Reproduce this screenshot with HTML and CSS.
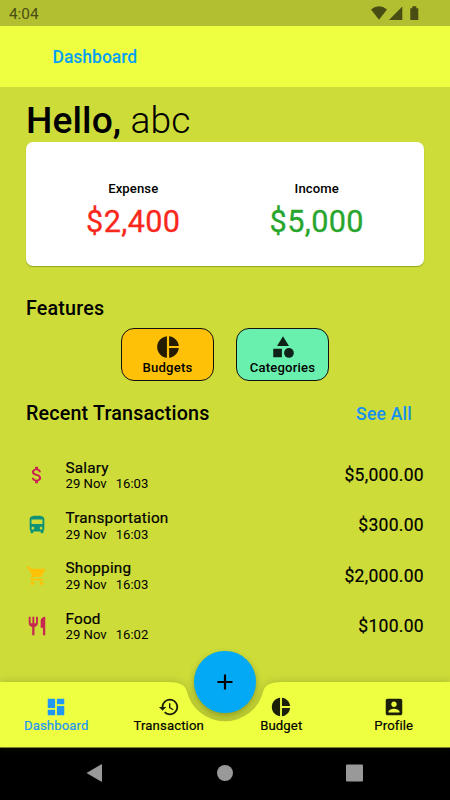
FILE: index.html
```html
<!DOCTYPE html>
<html lang="en">
<head>
<meta charset="utf-8">
<title>Dashboard</title>
<link rel="stylesheet" href="styles.css">
</head>
<body>
<svg class="sprite" width="0" height="0">
  <symbol id="pie" viewBox="0 0 24 24"><path d="M11 2v20c-5.070-.5-9-4.790-9-10s3.930-9.500 9-10zm2.030 0v8.990H22c-.47-4.740-4.240-8.520-8.970-8.990zm0 11.010V22c4.740-.47 8.500-4.250 8.970-8.990h-8.970z"/></symbol>
</svg>
<div class="screen">
  <div class="status">
    <span class="clock">4:04</span>
    <svg class="status-icons" width="50" height="16" viewBox="0 0 50 16"><path d="M0 3.600Q8-3.200 16 3.600L8 13.700zM18 14L31.300.6V14zM39.300 2.300h2V.3h4v2h2V14h-8z"/></svg>
  </div>
  <header class="appbar">Dashboard</header>
  <main class="content">
    <h1 class="hello"><b>Hello,</b> <span>abc</span></h1>
    <section class="card">
      <div class="total"><span class="label">Expense</span><span class="sum expense">$2,400</span></div>
      <div class="total"><span class="label">Income</span><span class="sum income">$5,000</span></div>
    </section>
    <h2 class="features-title">Features</h2>
    <div class="features">
      <div class="feature budgets"><svg><use href="#pie"/></svg><span>Budgets</span></div>
      <div class="feature categories"><svg viewBox="0 0 24 24"><path d="M12 2l-5.500 9h11zM3 13.500h8v8H3z"/><circle cx="17.500" cy="17.500" r="4.500"/></svg><span>Categories</span></div>
    </div>
    <div class="recent"><h2>Recent Transactions</h2><a class="see-all">See All</a></div>
    <ul class="list">
      <li>
        <svg class="pink" viewBox="0 0 24 24"><path d="M11.800 10.900c-2.270-.59-3-1.200-3-2.150 0-1.090 1.010-1.850 2.700-1.850 1.780 0 2.440.85 2.500 2.100h2.210c-.07-1.720-1.120-3.300-3.210-3.810V3h-3v2.160c-1.940.42-3.500 1.680-3.500 3.610 0 2.310 1.910 3.460 4.700 4.130 2.500.6 3 1.480 3 2.410 0 .69-.49 1.790-2.700 1.790-2.060 0-2.870-.92-2.980-2.100h-2.200c.12 2.190 1.760 3.420 3.680 3.830V21h3v-2.150c1.950-.37 3.500-1.500 3.500-3.550 0-2.840-2.430-3.810-4.700-4.400z"/></svg>
        <div class="info"><span class="name">Salary</span><span class="date"><span>29 Nov</span><span>16:03</span></span></div><span class="amount">$5,000.00</span>
      </li>
      <li>
        <svg class="teal" viewBox="0 0 24 24"><path d="M4 16c0 .88.39 1.670 1 2.220V20c0 .55.45 1 1 1h1c.55 0 1-.45 1-1v-1h8v1c0 .55.45 1 1 1h1c.55 0 1-.45 1-1v-1.780c.61-.55 1-1.340 1-2.220V6c0-3.500-3.580-4-8-4s-8 .5-8 4v10zm3.500 1c-.83 0-1.500-.67-1.500-1.500S6.670 14 7.500 14s1.500.67 1.500 1.500S8.330 17 7.500 17zm9 0c-.83 0-1.500-.67-1.500-1.500s.67-1.500 1.500-1.500 1.500.67 1.500 1.500-.67 1.500-1.500 1.500zm1.500-6H6V6h12v5z"/></svg>
        <div class="info"><span class="name">Transportation</span><span class="date"><span>29 Nov</span><span>16:03</span></span></div><span class="amount">$300.00</span>
      </li>
      <li>
        <svg class="amber" viewBox="0 0 24 24"><path d="M7 18c-1.100 0-1.990.9-1.990 2S5.900 22 7 22s2-.9 2-2-.9-2-2-2zM1 2v2h2l3.600 7.590-1.350 2.450c-.16.28-.25.61-.25.96 0 1.100.9 2 2 2h12v-2H7.420c-.14 0-.25-.11-.25-.25l.03-.12.9-1.630h7.450c.75 0 1.410-.41 1.750-1.030l3.580-6.490c.08-.14.12-.31.12-.48 0-.55-.45-1-1-1H5.210l-.94-2H1zm16 16c-1.100 0-1.990.9-1.990 2s.89 2 1.990 2 2-.9 2-2-.9-2-2-2z"/></svg>
        <div class="info"><span class="name">Shopping</span><span class="date"><span>29 Nov</span><span>16:03</span></span></div><span class="amount">$2,000.00</span>
      </li>
      <li>
        <svg class="red" viewBox="0 0 24 24"><path d="M11 9H9V2H7v7H5V2H3v7c0 2.120 1.660 3.840 3.750 3.970V22h2.500v-9.030C11.340 12.840 13 11.120 13 9V2h-2v7zm5-3v8h2.500v8H21V2c-2.760 0-5 2.240-5 4z"/></svg>
        <div class="info"><span class="name">Food</span><span class="date"><span>29 Nov</span><span>16:02</span></span></div><span class="amount">$100.00</span>
      </li>
    </ul>
  </main>
  <nav class="tabs">
    <svg class="tabs-shape" width="450" height="66" viewBox="0 0 450 66"><path d="M0 0H168.100Q184.500 0 186.700 9.100A39.400 39.400 0 0 0 263.300 9.100Q265.500 0 281.900 0H450V65.500H0z"/></svg>
    <div class="tab active"><svg viewBox="0 0 24 24"><path d="M3 13h8V3H3v10zm0 8h8v-6H3v6zm10 0h8V11h-8v10zm0-18v6h8V3h-8z"/></svg><span>Dashboard</span></div>
    <div class="tab"><svg viewBox="0 0 24 24"><path d="M13 3c-4.970 0-9 4.030-9 9H1l3.890 3.890.07.14L9 12H6c0-3.870 3.130-7 7-7s7 3.130 7 7-3.130 7-7 7c-1.930 0-3.680-.79-4.940-2.060l-1.420 1.420C8.270 19.990 10.510 21 13 21c4.970 0 9-4.030 9-9s-4.030-9-9-9zm-1 5v5l4.280 2.540.72-1.210-3.500-2.080V8H12z"/></svg><span>Transaction</span></div>
    <div class="tab"><svg><use href="#pie"/></svg><span>Budget</span></div>
    <div class="tab"><svg viewBox="0 0 24 24"><path d="M3 5v14c0 1.100.89 2 2 2h14c1.100 0 2-.9 2-2V5c0-1.100-.9-2-2-2H5c-1.110 0-2 .9-2 2zm12 4c0 1.660-1.340 3-3 3s-3-1.340-3-3 1.340-3 3-3 3 1.340 3 3zm-9 8c0-2 4-3.100 6-3.100s6 1.100 6 3.100v1H6v-1z"/></svg><span>Profile</span></div>
    <div class="fab"><svg viewBox="0 0 24 24"><path d="M19 13h-6v6h-2v-6H5v-2h6V5h2v6h6v2z"/></svg></div>
  </nav>
  <div class="system">
    <svg width="450" height="52" viewBox="0 0 450 52"><path d="M86.500 26L101 17.500Q102 17 102 18V34Q102 35 101 34.500z"/><circle cx="225" cy="26" r="8"/><rect x="346" y="17.500" width="17" height="17" rx="1"/></svg>
  </div>
</div>
</body>
</html>
```
FILE: styles.css
```css
* { box-sizing: border-box; }
body { margin: 0; font-family: Roboto, "Liberation Sans", sans-serif; color: #000; }
h1, h2, ul { margin: 0; padding: 0; }
svg { display: block; flex: none; }
.sprite { position: absolute; }
.screen { width: 450px; height: 800px; overflow: hidden; background: #cddc39; display: flex; flex-direction: column; }
.status { height: 26px; flex: none; background: #b2bf31; display: flex; justify-content: space-between; align-items: center; padding: 1px 29px 0 9px; color: #484d14; }
.clock { font-size: 15.300px; }
.status-icons { fill: #484d14; }
.appbar { height: 61.400px; flex: none; background: #eeff41; color: #03a0f4; font-size: 17.500px; font-weight: 500; line-height: 62px; padding-left: 52.500px; }
.content { flex: 1; min-height: 0; padding: 0 26px; }
.hello { height: 54.600px; padding-top: 11px; font-size: 37.200px; line-height: 45px; font-weight: 300; white-space: nowrap; letter-spacing: .1px; }
.hello b { font-weight: 500; }
.card { height: 124px; background: #fff; border-radius: 7px; box-shadow: 0 1px 1px rgba(90,110,0,.5); display: flex; justify-content: center; padding: 38px 15.500px 0; }
.total { flex: 1; display: flex; flex-direction: column; align-items: center; }
.label { font-size: 13.100px; line-height: 18px; font-weight: 500; letter-spacing: .1px; }
.sum { font-size: 30.600px; line-height: 36px; margin-top: 6px; letter-spacing: .4px; -webkit-text-stroke: .3px currentColor; }
.expense { color: #f9281c; }
.income { color: #27a52c; }
h2 { font-size: 19.700px; line-height: 24px; font-weight: 500; letter-spacing: .18px; }
.features-title { margin-top: 31px; }
.features { display: flex; justify-content: center; gap: 22px; margin-top: 7px; }
.feature { width: 93px; height: 53px; border: 1px solid #111; border-radius: 13px; display: flex; flex-direction: column; align-items: center; padding-top: 5px; font-size: 13.100px; line-height: 16px; font-weight: 500; letter-spacing: .2px; }
.feature svg { width: 26px; height: 26px; fill: #241c00; }
.budgets { background: #ffc107; }
.categories { background: #69f0ae; }
.categories svg { fill: #0f2219; }
.recent { display: flex; justify-content: space-between; margin-top: 21px; padding-right: 12px; }
.see-all { color: #1490f0; font-size: 17.500px; line-height: 24px; font-weight: 500; letter-spacing: .25px; }
.list { list-style: none; margin-top: 24px; }
.list li { height: 50.300px; display: flex; align-items: center; }
.list svg { width: 22px; height: 22px; }
.info { flex: 1; margin-left: 17.500px; padding-top: 1px; display: flex; flex-direction: column; }
.name { font-size: 15.300px; line-height: 17px; letter-spacing: .2px; -webkit-text-stroke: .2px currentColor; }
.date { display: flex; gap: 9px; margin-top: -.5px; font-size: 13.100px; line-height: 15px; letter-spacing: .02px; }
.amount { font-size: 17.500px; line-height: 22px; letter-spacing: .3px; -webkit-text-stroke: .2px currentColor; }
.pink { fill: #c91f50; }
.teal { fill: #0d9276; }
.amber { fill: #ffc107; }
.red { fill: #c62850; }
.tabs { position: relative; height: 65.500px; flex: none; display: grid; grid-template-columns: repeat(4, 1fr); }
.tabs-shape { position: absolute; left: 0; top: 0; fill: #eeff41; overflow: visible; filter: drop-shadow(0 0 4px rgba(60,70,0,.25)); }
.tab { position: relative; display: flex; flex-direction: column; align-items: center; padding-top: 14px; font-size: 13.100px; line-height: 16px; letter-spacing: .15px; }
.tab span { -webkit-text-stroke: .2px currentColor; }
.tab svg { width: 22px; height: 22px; fill: #1c1f08; }
.active { color: #2196f3; }
.tab.active svg { fill: #2196f3; }
.fab { position: absolute; left: 194.400px; top: -30.600px; width: 61.200px; height: 61.200px; border-radius: 50%; background: #03a9f4; display: flex; align-items: center; justify-content: center; box-shadow: 0 3px 6px rgba(50,60,0,.4); }
.fab svg { width: 26px; height: 26px; }
.system { height: 52.600px; flex: none; background: #000; }
.system svg { fill: #999; }
```
